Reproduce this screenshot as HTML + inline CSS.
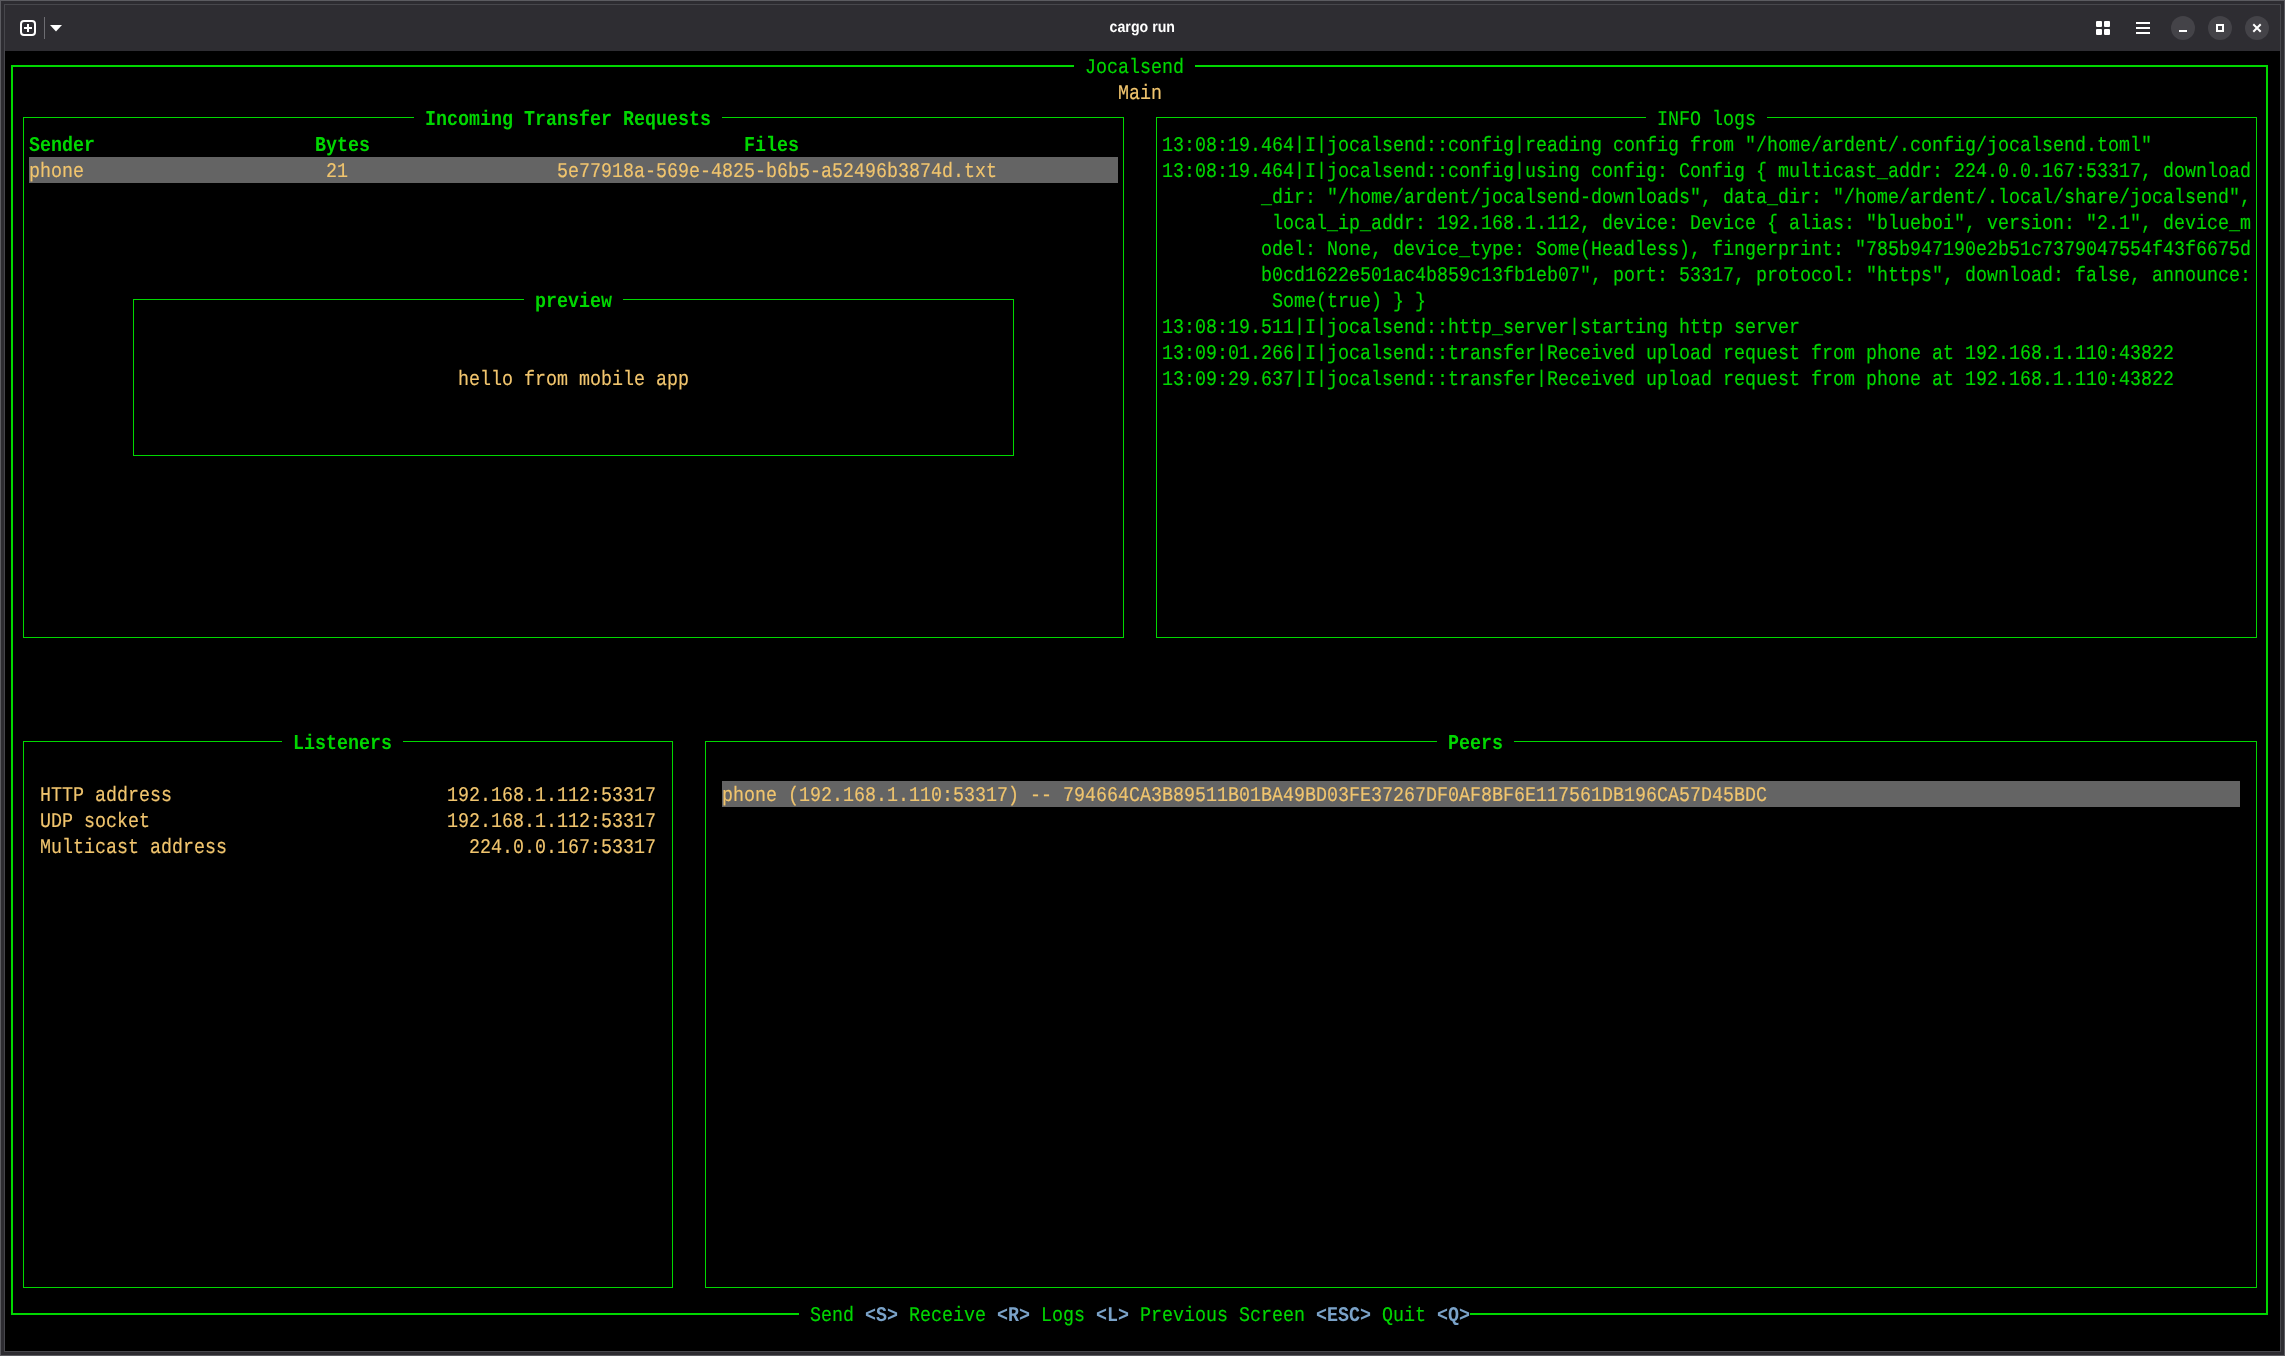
<!DOCTYPE html>
<html><head><meta charset="utf-8"><title>cargo run</title>
<style>
html,body{margin:0;padding:0;background:#000;}
body{width:2285px;height:1356px;position:relative;overflow:hidden;font-family:"Liberation Mono",monospace;}
#frame{position:absolute;left:0;top:0;width:2285px;height:1356px;box-sizing:border-box;border:1px solid #5b5b60;background:#2d2c31;}
#frame2{position:absolute;left:4px;top:4px;width:2277px;height:1348px;box-sizing:border-box;border:1px solid #47474c;background:#000;}
#tb{position:absolute;left:5px;top:5px;width:2275px;height:46px;background:#2e2d32;}
#title{position:absolute;left:0;top:4.4px;width:2285px;height:46px;line-height:46px;text-align:center;color:#fff;font-family:"Liberation Sans",sans-serif;font-weight:bold;font-size:14px;text-rendering:geometricPrecision;}
#title i{display:inline-block;font-style:normal;transform-origin:50% 28px;transform:scale(1.012,1.12);}
.bx{position:absolute;box-sizing:border-box;border:1px solid #00d700;}
.bx.k{border-width:2px;}
.hl{position:absolute;height:26px;background:#646464;}
.t{text-rendering:geometricPrecision;position:absolute;height:26px;line-height:26px;white-space:pre;font-size:18.333px;letter-spacing:0px;-webkit-text-stroke:0.15px currentColor;}
.t i{display:block;font-style:normal;height:26px;position:relative;top:2.7px;transform-origin:0 18.5px;transform:scaleY(1.14);}
.t b{display:inline-block;font-weight:normal;clip-path:inset(0 0 7px 0);}
.g{color:#00d700;}
.y{color:#f1c56e;}
.b{color:#7aa2c8;}
.B{font-weight:bold;-webkit-text-stroke:0.0px currentColor;}
.t.B i{transform:scaleY(1.15);}
svg{position:absolute;left:0;top:0;}
#term{position:absolute;left:0;top:0;width:2285px;height:1356px;will-change:transform;}
</style></head><body>
<div id="frame"></div><div id="frame2"></div><div id="tb"></div>
<svg width="2285" height="56" viewBox="0 0 2285 56">
<rect x="21" y="21" width="14" height="14" rx="3" ry="3" fill="none" stroke="#fff" stroke-width="2"/>
<rect x="24" y="27" width="8" height="2" fill="#fff"/><rect x="27" y="24" width="2" height="8" fill="#fff"/>
<rect x="44" y="17" width="1" height="22" fill="#6d6d72"/>
<path d="M50 25 L62 25 L56 31.5 Z" fill="#fff"/>
<g fill="#fff">
<rect x="2096" y="21" width="6" height="6" rx="1"/><rect x="2104" y="21" width="6" height="6" rx="1"/>
<rect x="2096" y="29" width="6" height="6" rx="1"/><rect x="2104" y="29" width="6" height="6" rx="1"/>
<rect x="2136" y="22" width="14" height="2"/><rect x="2136" y="27" width="14" height="2"/><rect x="2136" y="32" width="14" height="2"/>
</g>
<g fill="#444348"><circle cx="2183" cy="28" r="12"/><circle cx="2220" cy="28" r="12"/><circle cx="2257" cy="28" r="12"/></g>
<rect x="2179" y="30" width="8" height="2" fill="#fff"/>
<rect x="2217" y="25" width="6" height="6" fill="none" stroke="#fff" stroke-width="2"/>
<path d="M2254 25 L2260 31 M2260 25 L2254 31" stroke="#fff" stroke-width="2" stroke-linecap="square" fill="none"/>
</svg>
<div id="term">
<div id="title"><i>cargo run</i></div>
<div class="bx k" style="left:11px;top:65px;width:2257px;height:1250px"></div>
<span class="t g" style="left:1074px;top:53px;width:121px;background:#000;"><i> Jocalsend </i></span>
<span class="t y" style="left:1118px;top:79px;"><i>Main</i></span>
<div class="bx" style="left:23px;top:117px;width:1101px;height:521px"></div>
<span class="t g B" style="left:414px;top:105px;width:308px;background:#000;"><i> Incoming Transfer Requests </i></span>
<span class="t g B" style="left:29px;top:131px;"><i>Sender</i></span>
<span class="t g B" style="left:315px;top:131px;"><i>Bytes</i></span>
<span class="t g B" style="left:744px;top:131px;"><i>Files</i></span>
<div class="hl" style="left:29px;top:157px;width:1089px"></div>
<span class="t y" style="left:29px;top:157px;"><i>phone</i></span>
<span class="t y" style="left:326px;top:157px;"><i>21</i></span>
<span class="t y" style="left:557px;top:157px;"><i>5e77918a-569e-4825-b6b5-a52496b3874d.txt</i></span>
<div class="bx" style="left:133px;top:299px;width:881px;height:157px"></div>
<span class="t g B" style="left:524px;top:287px;width:99px;background:#000;"><i> preview </i></span>
<span class="t y" style="left:458px;top:365px;"><i>hello from mobile app</i></span>
<div class="bx" style="left:1156px;top:117px;width:1101px;height:521px"></div>
<span class="t g" style="left:1646px;top:105px;width:121px;background:#000;"><i> INFO logs </i></span>
<span class="t g" style="left:1162px;top:131px;"><i>13:08:19.464<b>|</b>I<b>|</b>jocalsend::config<b>|</b>reading config from "/home/ardent/.config/jocalsend.toml"</i></span>
<span class="t g" style="left:1162px;top:157px;"><i>13:08:19.464<b>|</b>I<b>|</b>jocalsend::config<b>|</b>using config: Config { multicast_addr: 224.0.0.167:53317, download</i></span>
<span class="t g" style="left:1261px;top:183px;"><i>_dir: "/home/ardent/jocalsend-downloads", data_dir: "/home/ardent/.local/share/jocalsend",</i></span>
<span class="t g" style="left:1261px;top:209px;"><i> local_ip_addr: 192.168.1.112, device: Device { alias: "blueboi", version: "2.1", device_m</i></span>
<span class="t g" style="left:1261px;top:235px;"><i>odel: None, device_type: Some(Headless), fingerprint: "785b947190e2b51c7379047554f43f6675d</i></span>
<span class="t g" style="left:1261px;top:261px;"><i>b0cd1622e501ac4b859c13fb1eb07", port: 53317, protocol: "https", download: false, announce:</i></span>
<span class="t g" style="left:1261px;top:287px;"><i> Some(true) } }</i></span>
<span class="t g" style="left:1162px;top:313px;"><i>13:08:19.511<b>|</b>I<b>|</b>jocalsend::http_server<b>|</b>starting http server</i></span>
<span class="t g" style="left:1162px;top:339px;"><i>13:09:01.266<b>|</b>I<b>|</b>jocalsend::transfer<b>|</b>Received upload request from phone at 192.168.1.110:43822</i></span>
<span class="t g" style="left:1162px;top:365px;"><i>13:09:29.637<b>|</b>I<b>|</b>jocalsend::transfer<b>|</b>Received upload request from phone at 192.168.1.110:43822</i></span>
<div class="bx" style="left:23px;top:741px;width:650px;height:547px"></div>
<span class="t g B" style="left:282px;top:729px;width:121px;background:#000;"><i> Listeners </i></span>
<span class="t y" style="left:40px;top:781px;"><i>HTTP address</i></span>
<span class="t y" style="left:447px;top:781px;"><i>192.168.1.112:53317</i></span>
<span class="t y" style="left:40px;top:807px;"><i>UDP socket</i></span>
<span class="t y" style="left:447px;top:807px;"><i>192.168.1.112:53317</i></span>
<span class="t y" style="left:40px;top:833px;"><i>Multicast address</i></span>
<span class="t y" style="left:469px;top:833px;"><i>224.0.0.167:53317</i></span>
<div class="bx" style="left:705px;top:741px;width:1552px;height:547px"></div>
<span class="t g B" style="left:1437px;top:729px;width:77px;background:#000;"><i> Peers </i></span>
<div class="hl" style="left:722px;top:781px;width:1518px"></div>
<span class="t y" style="left:722px;top:781px;"><i>phone (192.168.1.110:53317) -- 794664CA3B89511B01BA49BD03FE37267DF0AF8BF6E117561DB196CA57D45BDC</i></span>
<span class="t" style="left:799px;top:1301px;width:671px;background:#000;"><i><span class="g"> Send </span><span class="b B">&lt;S&gt;</span><span class="g"> Receive </span><span class="b B">&lt;R&gt;</span><span class="g"> Logs </span><span class="b B">&lt;L&gt;</span><span class="g"> Previous Screen </span><span class="b B">&lt;ESC&gt;</span><span class="g"> Quit </span><span class="b B">&lt;Q&gt;</span></i></span>
</div>
</body></html>
